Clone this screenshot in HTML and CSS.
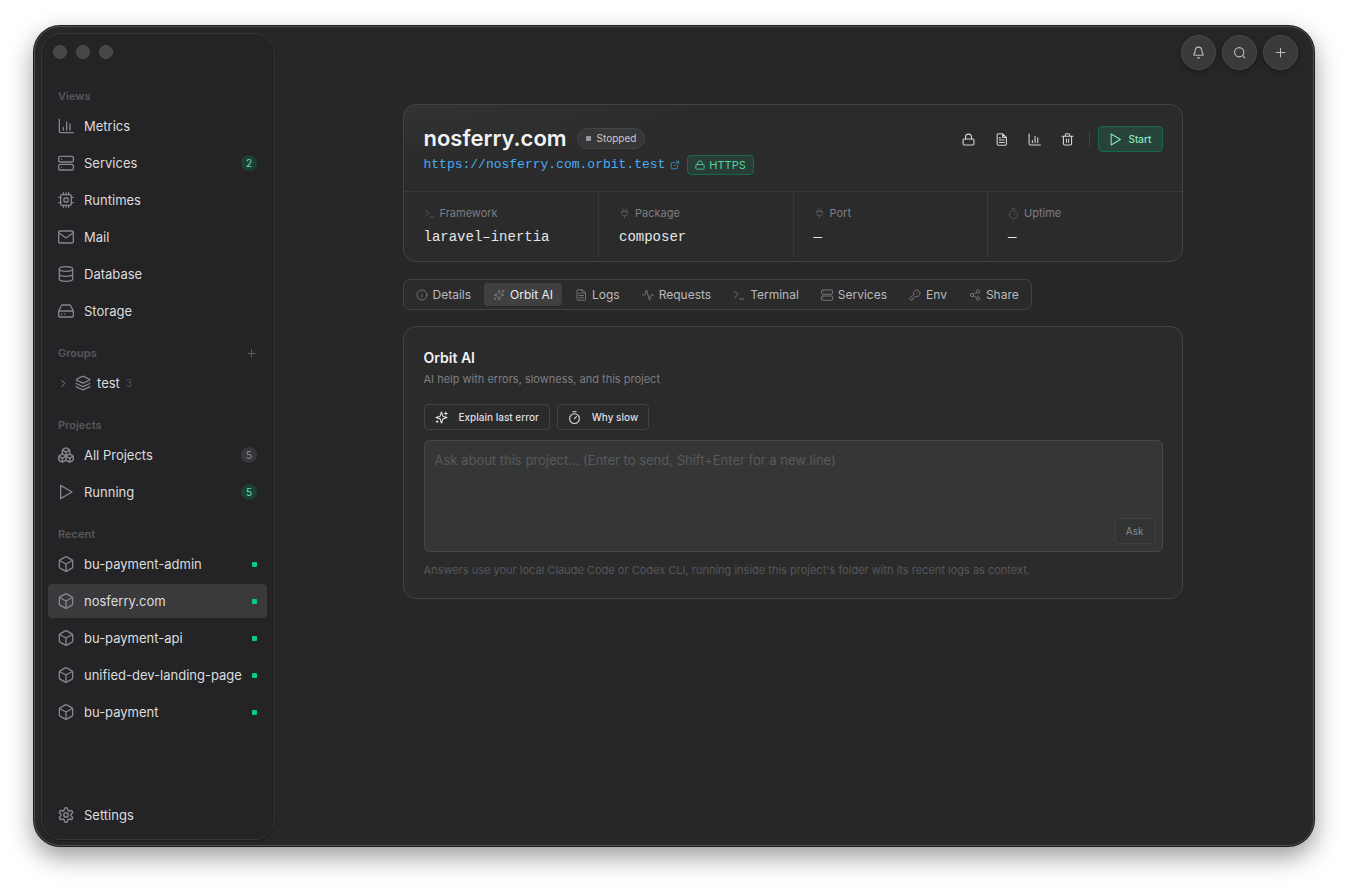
FILE: index.html
```html
<!DOCTYPE html>
<html lang="en">
<head>
<meta charset="utf-8">
<title>Orbit</title>
<link rel="stylesheet" href="styles.css">
</head>
<body>
<svg class="sprite" aria-hidden="true">
  <symbol id="chart" viewBox="0 0 24 24"><path d="M2 2v18a2 2 0 0 0 2 2h19M8 18v-4M13 18V6M18 18V9"/></symbol>
  <symbol id="server" viewBox="0 0 24 24"><rect x="1" y="2" width="22" height="8.500" rx="2"/><rect x="1" y="14" width="22" height="8.500" rx="2"/><path d="M5.500 6.200h.01M5.500 18.200h.01"/></symbol>
  <symbol id="cpu" viewBox="0 0 24 24"><rect x="4" y="4" width="16" height="16" rx="2"/><rect x="9" y="9" width="6" height="6" rx="1"/><path d="M8 1v3M16 1v3M8 20v3M16 20v3M20 8h3M20 16h3M1 8h3M1 16h3M12 1v3M12 20v3"/></symbol>
  <symbol id="mail" viewBox="0 0 24 24"><rect x="1" y="3" width="22" height="18" rx="2"/><path d="m1.500 6 9 6.500a2.500 2.500 0 0 0 3 0l9-6.500"/></symbol>
  <symbol id="db" viewBox="0 0 24 24"><ellipse cx="12" cy="4.500" rx="10" ry="3.500"/><path d="M2 4.500v15C2 21.400 6.500 23 12 23s10-1.600 10-3.500v-15M2 12c0 1.900 4.500 3.500 10 3.500S22 13.900 22 12"/></symbol>
  <symbol id="drive" viewBox="0 0 24 24"><path d="M1 12h22M5 4.200 1.300 11.500a2 2 0 0 0-.3 1V19a2 2 0 0 0 2 2h18a2 2 0 0 0 2-2v-6.500a2 2 0 0 0-.3-1L19 4.200A2 2 0 0 0 17.200 3H6.800A2 2 0 0 0 5 4.200zM5.500 16.500h.01M10 16.500h.01"/></symbol>
  <symbol id="plus" viewBox="0 0 24 24"><path d="M4 12h16M12 4v16"/></symbol>
  <symbol id="chevron" viewBox="0 0 24 24"><path d="m8 5 7 7-7 7"/></symbol>
  <symbol id="layers" viewBox="0 0 24 24"><path d="M12.800 2.200a2 2 0 0 0-1.700 0L2.600 6.100a1 1 0 0 0 0 1.800l8.600 3.900a2 2 0 0 0 1.700 0l8.600-3.900a1 1 0 0 0 0-1.800zM2 12.200c0 .4.200.7.600.9l8.600 3.900a2 2 0 0 0 1.700 0l8.500-3.900c.4-.2.600-.5.600-.9M2 17.200c0 .4.200.7.600.9l8.600 3.900a2 2 0 0 0 1.700 0l8.500-3.900c.4-.2.600-.5.600-.9"/></symbol>
  <symbol id="boxes" viewBox="1 1 22 22"><path d="M2.970 12.920A2 2 0 0 0 2 14.630v3.240a2 2 0 0 0 .970 1.710l3 1.800a2 2 0 0 0 2.060 0L12 19v-5.500l-5-3zM7 16.500l-4.740-2.850M7 16.500l5-3M7 16.500v5.170M12 13.500V19l3.970 2.380a2 2 0 0 0 2.060 0l3-1.800a2 2 0 0 0 .970-1.710v-3.240a2 2 0 0 0-.970-1.710L17 10.500zM17 16.500l-5-3M17 16.500l4.740-2.850M17 16.500v5.170M7.970 4.420A2 2 0 0 0 7 6.130v4.370l5 3 5-3V6.130a2 2 0 0 0-.970-1.710l-3-1.800a2 2 0 0 0-2.060 0zM12 8 7.260 5.150M12 8l4.740-2.850M12 13.500V8"/></symbol>
  <symbol id="play" viewBox="0 0 24 24"><path d="M4 2v20l17-10z"/></symbol>
  <symbol id="box" viewBox="0 0 24 24"><path d="M22 7.500a2 2 0 0 0-1-1.700l-8-4.400a2 2 0 0 0-2 0L3 5.800a2 2 0 0 0-1 1.700v9a2 2 0 0 0 1 1.700l8 4.400a2 2 0 0 0 2 0l8-4.400a2 2 0 0 0 1-1.700zM2.300 6.700 12 12l9.700-5.300M12 22.800V12"/></symbol>
  <symbol id="gear" viewBox="1 1 22 22"><path d="M12.220 2h-.44a2 2 0 0 0-2 2v.18a2 2 0 0 1-1 1.730l-.43.25a2 2 0 0 1-2 0l-.15-.08a2 2 0 0 0-2.730.730l-.22.38a2 2 0 0 0 .730 2.730l.15.1a2 2 0 0 1 1 1.720v.51a2 2 0 0 1-1 1.740l-.15.09a2 2 0 0 0-.730 2.730l.22.38a2 2 0 0 0 2.730.730l.15-.08a2 2 0 0 1 2 0l.43.25a2 2 0 0 1 1 1.730V20a2 2 0 0 0 2 2h.44a2 2 0 0 0 2-2v-.18a2 2 0 0 1 1-1.730l.43-.25a2 2 0 0 1 2 0l.15.08a2 2 0 0 0 2.730-.730l.22-.39a2 2 0 0 0-.730-2.730l-.15-.08a2 2 0 0 1-1-1.740v-.5a2 2 0 0 1 1-1.740l.15-.09a2 2 0 0 0 .730-2.730l-.22-.38a2 2 0 0 0-2.730-.730l-.15.08a2 2 0 0 1-2 0l-.43-.25a2 2 0 0 1-1-1.730V4a2 2 0 0 0-2-2z"/><circle cx="12" cy="12" r="3"/></symbol>
  <symbol id="bell" viewBox="0 0 24 24"><path d="M10.300 21.500a2 2 0 0 0 3.400 0M3.300 15.300A1 1 0 0 0 4 17h16a1 1 0 0 0 .7-1.700C19.400 14 18 12.500 18 8A6 6 0 0 0 6 8c0 4.500-1.400 6-2.700 7.300"/></symbol>
  <symbol id="search" viewBox="0 0 24 24"><circle cx="11.500" cy="11.500" r="8.500"/><path d="m22 22-4.500-4.500"/></symbol>
  <symbol id="lock" viewBox="0 0 24 24"><rect x="2" y="11" width="20" height="11" rx="2"/><path d="M6.500 11V7.500a5.500 5.500 0 0 1 11 0V11"/></symbol>
  <symbol id="file" viewBox="0 0 24 24"><path d="M14 1.500H6a2 2 0 0 0-2 2v17a2 2 0 0 0 2 2h13a2 2 0 0 0 2-2V8zM14 1.500V8h7M8 9h2M8 13h9M8 17.500h9"/></symbol>
  <symbol id="trash" viewBox="0 0 24 24"><path d="M2 6h20M19.500 6v14a2 2 0 0 1-2 2h-11a2 2 0 0 1-2-2V6M8 6V3.500a2 2 0 0 1 2-2h4a2 2 0 0 1 2 2V6M10 11v6M14 11v6"/></symbol>
  <symbol id="term" viewBox="0 0 24 24"><path d="m3 18 7-7-7-7M13 20h9"/></symbol>
  <symbol id="plug" viewBox="0 0 24 24"><path d="M12 22v-5M9 8V2M15 8V2M18 8v4.500a4 4 0 0 1-4 4h-4a4 4 0 0 1-4-4V8zM4.500 8h15"/></symbol>
  <symbol id="timer" viewBox="0 0 24 24"><path d="M9 1.500h6M12 14l3.500-3.500"/><circle cx="12" cy="14" r="9"/></symbol>
  <symbol id="ext" viewBox="0 0 24 24"><path d="M15 3h6v6M10 14 21 3M18 13v6a2 2 0 0 1-2 2H5a2 2 0 0 1-2-2V8a2 2 0 0 1 2-2h6"/></symbol>
  <symbol id="info" viewBox="0 0 24 24"><circle cx="12" cy="12" r="10"/><path d="M12 16.500V12M12 8h.01"/></symbol>
  <symbol id="spark" viewBox="0 0 24 24"><path d="M9.900 15.500A2 2 0 0 0 8.500 14.100l-6.100-1.600a.5.500 0 0 1 0-1l6.100-1.500A2 2 0 0 0 9.900 8.500l1.600-6.100a.5.500 0 0 1 1 0l1.600 6.100A2 2 0 0 0 15.500 10l6.100 1.500a.5.500 0 0 1 0 1l-6.100 1.600a2 2 0 0 0-1.400 1.400l-1.600 6.100a.5.500 0 0 1-1 0zM20 2v5M22.500 4.500h-5M4 18v3M5.500 19.500h-3"/></symbol>
  <symbol id="pulse" viewBox="0 0 24 24"><path d="M23 12h-3.500a2 2 0 0 0-1.900 1.500l-2.400 8.300a.25.250 0 0 1-.5 0L9.200 2.200a.25.250 0 0 0-.5 0l-2.300 8.300A2 2 0 0 1 4.500 12H1"/></symbol>
  <symbol id="key" viewBox="0 0 24 24"><path d="M2.600 17.400A2 2 0 0 0 2 18.800V21a1 1 0 0 0 1 1h3a1 1 0 0 0 1-1v-1a1 1 0 0 1 1-1h1a1 1 0 0 0 1-1v-1a1 1 0 0 1 1-1h.2a2 2 0 0 0 1.400-.6l.8-.8a6.500 6.500 0 1 0-4-4zM16.500 7.500h.01"/></symbol>
  <symbol id="share" viewBox="0 0 24 24"><circle cx="18" cy="5" r="3.300"/><circle cx="6" cy="12" r="3.300"/><circle cx="18" cy="19" r="3.300"/><path d="m8.900 13.700 6.200 3.600M15.100 6.700l-6.200 3.600"/></symbol>
</svg>

<div class="window">
  <aside class="sidebar">
    <div class="lights"><span></span><span></span><span></span></div>
    <nav class="nav">
      <section class="group">
        <h2>Views</h2>
        <a href="#"><svg><use href="#chart"/></svg>Metrics</a>
        <a href="#"><svg><use href="#server"/></svg>Services<span class="count on">2</span></a>
        <a href="#"><svg><use href="#cpu"/></svg>Runtimes</a>
        <a href="#"><svg><use href="#mail"/></svg>Mail</a>
        <a href="#"><svg><use href="#db"/></svg>Database</a>
        <a href="#"><svg><use href="#drive"/></svg>Storage</a>
      </section>
      <section class="group">
        <h2>Groups<button class="add" aria-label="Add group"><svg><use href="#plus"/></svg></button></h2>
        <a class="folder" href="#"><svg class="chev"><use href="#chevron"/></svg><svg><use href="#layers"/></svg>test<small>3</small></a>
      </section>
      <section class="group">
        <h2>Projects</h2>
        <a href="#"><svg><use href="#boxes"/></svg>All Projects<span class="count">5</span></a>
        <a href="#"><svg><use href="#play"/></svg>Running<span class="count on">5</span></a>
      </section>
      <section class="group">
        <h2>Recent</h2>
        <a href="#"><svg><use href="#box"/></svg>bu-payment-admin<i class="dot"></i></a>
        <a class="active" href="#"><svg><use href="#box"/></svg>nosferry.com<i class="dot"></i></a>
        <a href="#"><svg><use href="#box"/></svg>bu-payment-api<i class="dot"></i></a>
        <a href="#"><svg><use href="#box"/></svg>unified-dev-landing-page<i class="dot"></i></a>
        <a href="#"><svg><use href="#box"/></svg>bu-payment<i class="dot"></i></a>
      </section>
      <section class="group bottom">
        <a href="#"><svg><use href="#gear"/></svg>Settings</a>
      </section>
    </nav>
  </aside>

  <main class="main">
    <div class="topbar">
      <button aria-label="Notifications"><svg><use href="#bell"/></svg></button>
      <button aria-label="Search"><svg><use href="#search"/></svg></button>
      <button aria-label="New"><svg><use href="#plus"/></svg></button>
    </div>
    <div class="content">
      <section class="card project">
        <header class="head">
          <div class="ident">
            <div class="title"><h1>nosferry.com</h1><span class="status">Stopped</span></div>
            <div class="address"><a class="url" href="#">https://nosferry.com.orbit.test<svg><use href="#ext"/></svg></a><span class="secure"><svg><use href="#lock"/></svg>HTTPS</span></div>
          </div>
          <div class="actions">
            <button class="tool" aria-label="Secure"><svg><use href="#lock"/></svg></button>
            <button class="tool" aria-label="Logs"><svg><use href="#file"/></svg></button>
            <button class="tool" aria-label="Metrics"><svg><use href="#chart"/></svg></button>
            <button class="tool" aria-label="Delete"><svg><use href="#trash"/></svg></button>
            <span class="rule"></span>
            <button class="start"><svg><use href="#play"/></svg>Start</button>
          </div>
        </header>
        <dl class="stats">
          <div><dt><svg><use href="#term"/></svg>Framework</dt><dd>laravel–inertia</dd></div>
          <div><dt><svg><use href="#plug"/></svg>Package</dt><dd>composer</dd></div>
          <div><dt><svg><use href="#plug"/></svg>Port</dt><dd>—</dd></div>
          <div><dt><svg><use href="#timer"/></svg>Uptime</dt><dd>—</dd></div>
        </dl>
      </section>

      <nav class="tabs">
        <button><svg><use href="#info"/></svg>Details</button>
        <button class="current"><svg><use href="#spark"/></svg>Orbit AI</button>
        <button><svg><use href="#file"/></svg>Logs</button>
        <button><svg><use href="#pulse"/></svg>Requests</button>
        <button><svg><use href="#term"/></svg>Terminal</button>
        <button><svg><use href="#server"/></svg>Services</button>
        <button><svg><use href="#key"/></svg>Env</button>
        <button><svg><use href="#share"/></svg>Share</button>
      </nav>

      <section class="card ai">
        <h2>Orbit AI</h2>
        <p class="sub">AI help with errors, slowness, and this project</p>
        <div class="prompts">
          <button><svg><use href="#spark"/></svg>Explain last error</button>
          <button><svg><use href="#timer"/></svg>Why slow</button>
        </div>
        <form class="composer">
          <textarea aria-label="Ask about this project" placeholder="Ask about this project… (Enter to send, Shift+Enter for a new line)"></textarea>
          <button type="button">Ask</button>
        </form>
        <p class="note">Answers use your local Claude Code or Codex CLI, running inside this project's folder with its recent logs as context.</p>
      </section>
    </div>
  </main>
</div>
</body>
</html>
```

FILE: styles.css
```css
* { box-sizing: border-box; }
body {
  margin: 0;
  min-height: 100vh;
  padding: 26px 34px 42px;
  display: flex;
  background: #fff;
  color: #dcdcde;
  font: 13px/20px Inter, "Liberation Sans", sans-serif;
}
h1, h2, p, dl, dd { margin: 0; }
a { color: inherit; text-decoration: none; }
button { border: 0; padding: 0; background: none; color: inherit; font: inherit; }
svg { flex: none; width: 16px; height: 16px; fill: none; stroke: currentColor; stroke-width: 2; stroke-linecap: round; stroke-linejoin: round; }
.sprite { position: absolute; width: 0; height: 0; }

.window {
  flex: 1;
  display: flex;
  padding: 6px 3px 5px 6px;
  border: 1px solid #505050;
  border-radius: 26px;
  background: #272727;
  box-shadow: 0 0 0 1px #1c1c1c, 0 10px 26px rgba(0, 0, 0, .42);
}

.sidebar {
  flex: none;
  width: 234px;
  display: flex;
  flex-direction: column;
  padding: 11px 7px 7px 6px;
  border: 1px solid #363638;
  border-radius: 20px;
  background: #242426;
  box-shadow: 0 1px 2px rgba(0, 0, 0, .35);
}
.lights { display: flex; gap: 9px; padding: 0 5px; }
.lights span { width: 14px; height: 14px; border: 1px solid #505052; border-radius: 50%; background: #474749; }
.nav { flex: 1; display: flex; flex-direction: column; gap: 15px; padding-top: 27px; }
.group { display: flex; flex-direction: column; gap: 3px; }
.group h2 { display: flex; align-items: center; justify-content: space-between; padding: 0 10px; color: #57575c; font-size: 11px; font-weight: 600; line-height: 20px; }
.group a { display: flex; align-items: center; gap: 10px; height: 34px; padding: 0 10px; border-radius: 4px; white-space: nowrap; }
.group a svg { color: #85858c; }
.group .active { background: #3a3a3c; }
.add { display: flex; color: #606066; }
.add svg { width: 11px; height: 11px; }
.group .folder { gap: 6px; }
.group .folder .chev { width: 11px; height: 11px; }
small { color: #505055; font-size: 10px; }
.count { min-width: 16px; height: 16px; margin-left: auto; border-radius: 8px; background: #38383a; color: #8c8c92; font-size: 10px; line-height: 16px; text-align: center; }
.count.on { background: #1e3f35; color: #5fe0a8; }
.dot { width: 5px; height: 5px; margin-left: auto; border-radius: 1px; background: #05cc88; }
.bottom { margin-top: auto; }

.main { flex: 1; min-width: 0; }
.topbar { display: flex; justify-content: flex-end; gap: 6px; padding: 2px 12px 0 0; }
.topbar button { display: grid; place-items: center; width: 35px; height: 35px; border: 1px solid #4a4a4a; border-radius: 50%; background: #3a3a3a; color: #bdbdbd; box-shadow: 0 2px 8px rgba(0, 0, 0, .3); }
.topbar svg { width: 13px; height: 13px; }
.content { max-width: 780px; margin: 0 auto; padding-top: 34px; }
.card { border: 1px solid #434344; border-radius: 13px; background: #2b2b2b; }

.project { padding-bottom: 3px; background: radial-gradient(ellipse at 0 0, #313432 0, #2b2b2b 290px); }
.head { display: flex; justify-content: space-between; align-items: flex-start; padding: 19px 19px 16px 20px; }
.title { display: flex; align-items: center; gap: 10px; height: 28px; }
h1 { color: #f2f2f4; font-size: 22px; font-weight: 600; line-height: 28px; }
.status { display: flex; align-items: center; gap: 6px; height: 21px; padding: 0 8px; border: 1px solid #454647; border-radius: 11px; background: #363738; color: #c8c8cb; font-size: 10px; }
.status::before { content: ""; width: 5px; height: 5px; border-radius: 1px; background: #96969e; }
.address { display: flex; align-items: center; gap: 7px; margin-top: 2px; height: 21px; }
.url { display: flex; align-items: center; gap: 5px; color: #45aef5; font: 13px/20px "Liberation Mono", monospace; }
.url svg { width: 10px; height: 10px; opacity: .8; }
.secure { display: flex; align-items: center; gap: 4px; height: 20px; padding: 0 7px; border: 1px solid #146a4b; border-radius: 4px; background: #283d35; color: #52d69c; font-size: 11px; }
.secure svg { width: 10px; height: 10px; }
.actions { display: flex; align-items: center; margin-top: 2px; }
.tool { display: grid; place-items: center; width: 33px; height: 26px; color: #d4d4d6; }
.tool svg, .start svg { width: 13px; height: 13px; }
.rule { width: 1px; height: 16px; margin: 0 8px 0 5px; background: #414142; }
.start { display: flex; align-items: center; gap: 6px; height: 26px; padding: 0 10px; border: 1px solid #146a4b; border-radius: 4px; background: #27433a; color: #86e8bc; font-size: 10px; font-weight: 500; }
.stats { display: grid; grid-template-columns: repeat(4, 1fr); border-top: 1px solid #383839; }
.stats div { padding: 11px 20px 10px; }
.stats div + div { border-left: 1px solid #383839; }
dt { display: flex; align-items: center; gap: 5px; color: #7d7d83; font-size: 11px; line-height: 20px; }
dt svg { width: 11px; height: 11px; color: #56565b; }
dd { margin-top: 3px; color: #e6e6e8; font: 14px/22px "Liberation Mono", monospace; }

.tabs { display: flex; gap: 4px; width: fit-content; margin-top: 17px; padding: 3px; border: 1px solid #434344; border-radius: 7px; background: #2b2b2b; }
.tabs button { display: flex; align-items: center; gap: 5px; height: 23px; padding: 0 9px; border-radius: 4px; color: #bababd; font-size: 12px; line-height: 22px; }
.tabs svg { width: 12px; height: 12px; color: #74747a; }
.tabs .current { background: #404041; color: #ededef; }

.ai { margin-top: 16px; padding: 21px 19px 18px 20px; }
.ai h2 { color: #f2f2f4; font-size: 14px; font-weight: 600; line-height: 20px; }
.sub { color: #7d7d83; font-size: 11px; line-height: 20px; margin-top: 1px; }
.prompts { display: flex; gap: 7px; margin-top: 15px; }
.prompts button { display: flex; align-items: center; gap: 11px; height: 26px; padding: 0 10px; border: 1px solid #434344; border-radius: 4px; color: #dedee0; font-size: 10px; font-weight: 500; }
.prompts svg { width: 13px; height: 13px; }
.composer { display: flex; flex-direction: column; align-items: flex-end; height: 112px; margin-top: 10px; padding: 9px 7px 7px 10px; border: 1px solid #484a49; border-radius: 6px; background: #353736; }
.composer textarea { flex: 1; align-self: stretch; min-height: 0; padding: 0; border: 0; outline: 0; resize: none; background: none; color: #dedee0; font: 13px/20px Inter, "Liberation Sans", sans-serif; }
.composer textarea::placeholder { color: #58585d; }
.composer button { height: 26px; padding: 0 10px; border: 1px solid #3f4140; border-radius: 4px; background: #323433; color: #8b8c8c; font-size: 10px; }
.note { margin-top: 8px; color: #56565b; font-size: 11px; line-height: 20px; }
```
